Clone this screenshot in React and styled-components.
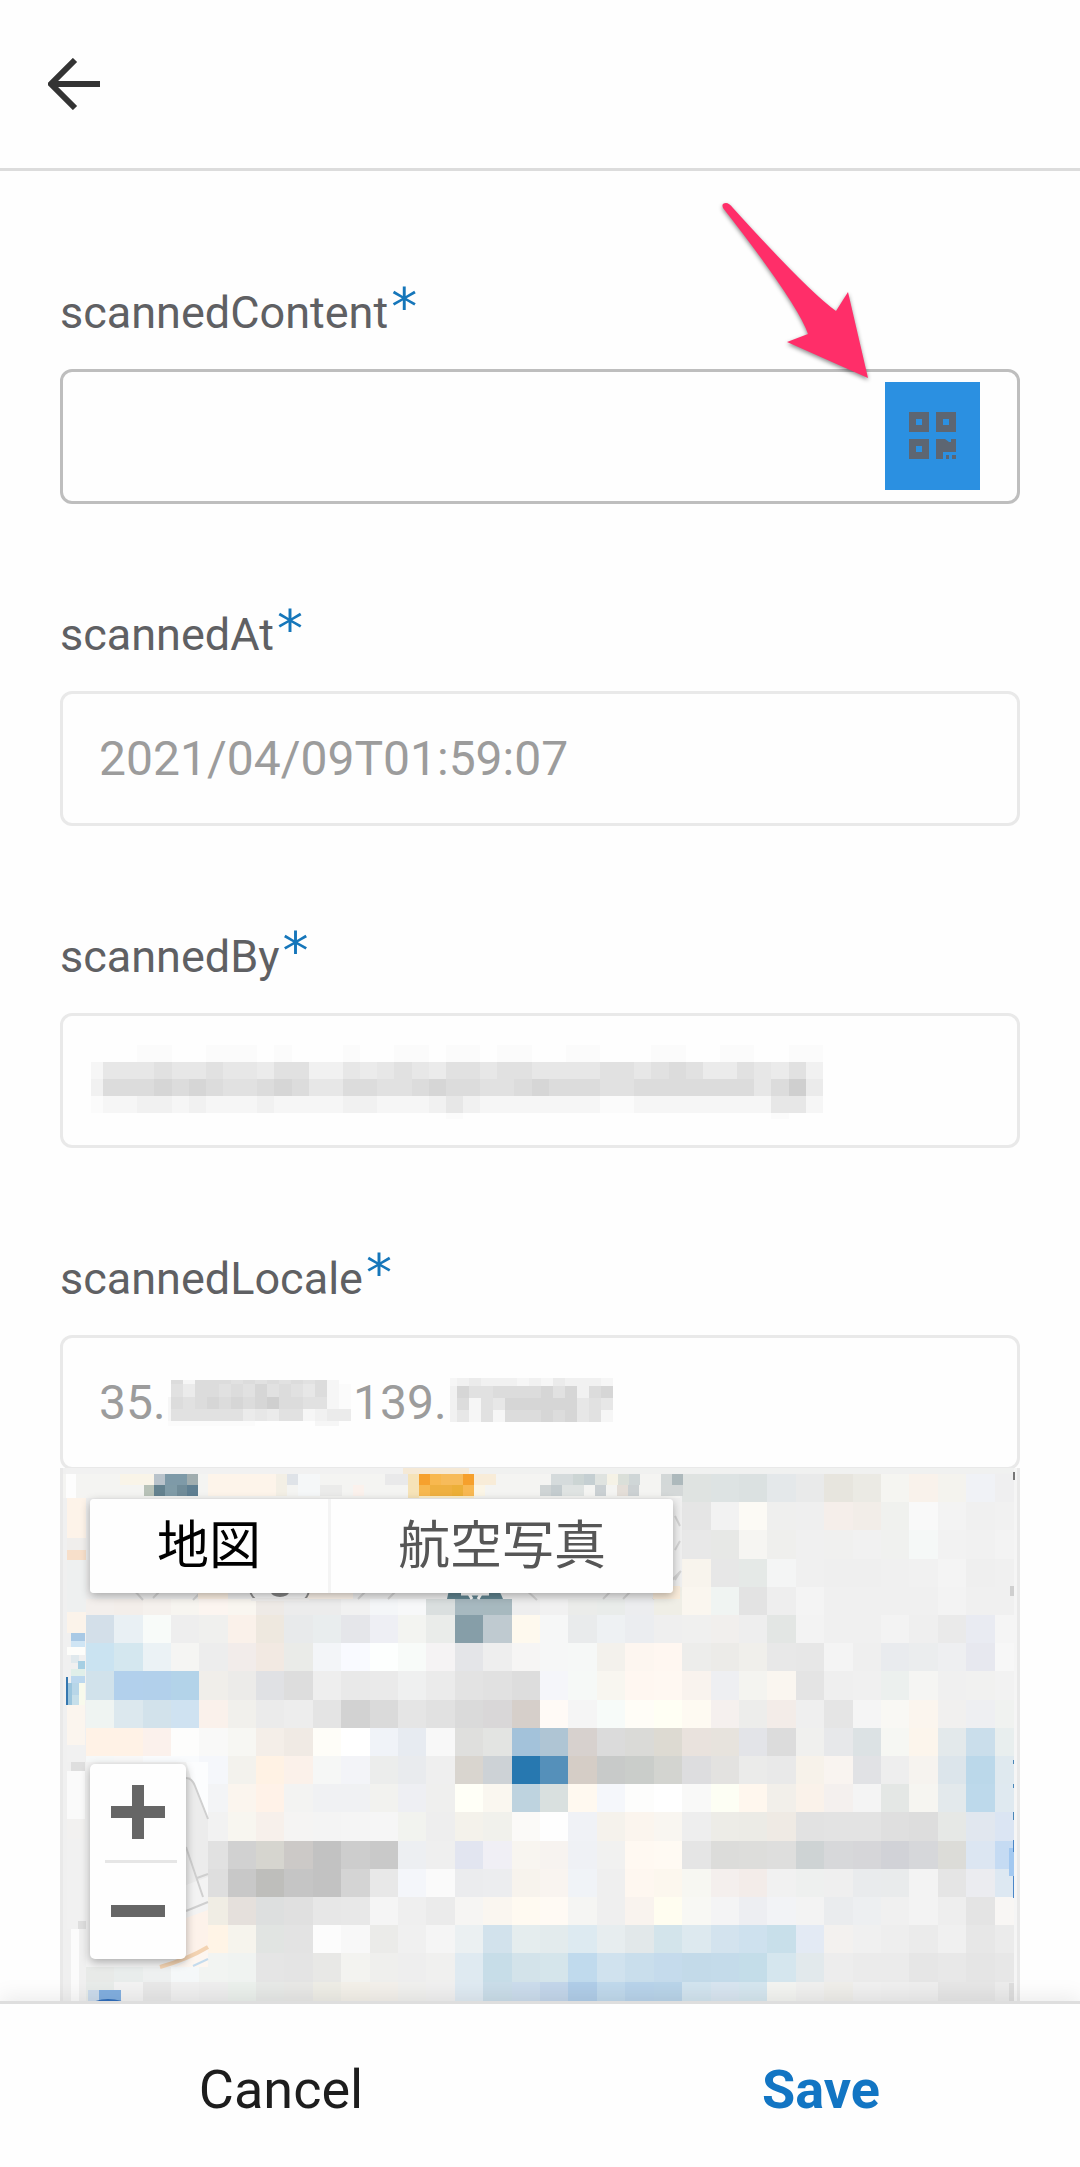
import React from "react";
import styled, { createGlobalStyle } from "styled-components";

const GlobalStyle = createGlobalStyle`
  *, *::before, *::after { box-sizing: border-box; }
  body { margin: 0; background: #fefefe; font-family: Roboto, "Noto Sans CJK JP", sans-serif; }
  button, input { font: inherit; }
`;

const Page = styled.div`
  display: flex;
  flex-direction: column;
  min-height: 100vh;
`;

const Header = styled.header`
  display: flex;
  align-items: center;
  height: 171px;
  padding: 0 36px;
  border-bottom: 3px solid #dcdcdc;
`;

const BackButton = styled.button`
  display: flex;
  padding: 12px;
  border: 0;
  background: none;
`;

const Form = styled.form`
  display: flex;
  flex: 1;
  flex-direction: column;
  gap: 105px;
  padding: 116px 60px 0;
`;

const Field = styled.div`
  display: flex;
  flex-direction: column;
`;

const Label = styled.label`
  margin-bottom: 30px;
  font-size: 45px;
  line-height: 52px;
  color: #5f6063;
`;

const Required = styled.span`
  margin-left: 3px;
  font-family: "DejaVu Sans", sans-serif;
  font-size: 52px;
  line-height: 0;
  vertical-align: 3px;
  color: #1576ba;
`;

const Shell = styled.div`
  position: relative;
  display: flex;
  align-items: center;
  gap: 2px;
  height: 135px;
  padding: 0 37px 0 36px;
  border: 3px solid ${(p) => (p.$active ? "#bebebe" : "#e9e9e9")};
  border-radius: 12px;
`;

const TextInput = styled.input`
  flex: ${(p) => (p.$width ? "none" : "1")};
  width: ${(p) => (p.$width ? p.$width + "px" : "auto")};
  min-width: 0;
  height: 100%;
  padding: 0;
  border: 0;
  outline: 0;
  background: none;
  font-size: 48px;
  color: #9c9c9c;
`;

const ScanButton = styled.button`
  display: flex;
  align-items: center;
  justify-content: center;
  width: 95px;
  height: 108px;
  margin-bottom: 2px;
  padding: 0;
  border: 0;
  background: #2b90e1;
`;

const Pointer = styled.svg`
  position: absolute;
  top: -177px;
  right: 142px;
  filter: drop-shadow(0 2px 2px rgba(0, 0, 0, 0.45));
`;

const MaskOver = styled.svg`
  position: absolute;
  left: 28px;
  top: 29px;
`;

const MaskInline = styled.svg`
  flex: none;
`;

const MapBox = styled.div`
  position: relative;
  height: 533px;
  margin-top: -2px;
  border: solid #e9e9e9;
  border-width: 0 3px;
  overflow: hidden;
  background: #f0f0f0;
`;

const MapCanvas = styled.svg`
  display: block;
  width: 100%;
  height: 534px;
`;

const MapTypes = styled.div`
  position: absolute;
  left: 27px;
  top: 31px;
  display: flex;
  border-radius: 4px;
  box-shadow: 0 3px 10px rgba(0, 0, 0, 0.3);
`;

const MapType = styled.button`
  height: 94px;
  padding: 0 67px 8px;
  border: 0;
  border-right: ${(p) => (p.$active ? "3px solid #f4f4f4" : "0")};
  border-radius: ${(p) => (p.$active ? "4px 0 0 4px" : "0 4px 4px 0")};
  background: #fefefe;
  font-family: "Noto Sans CJK JP", sans-serif;
  font-size: 52px;
  line-height: 72px;
  color: ${(p) => (p.$active ? "#000" : "#565656")};
`;

const ZoomPanel = styled.div`
  position: absolute;
  left: 27px;
  top: 296px;
  width: 96px;
  border-radius: 5px;
  background: #fefefe;
  box-shadow: 0 3px 10px rgba(0, 0, 0, 0.3);
`;

const ZoomButton = styled.button`
  display: flex;
  align-items: center;
  justify-content: center;
  width: 100%;
  height: 96px;
  padding: 0;
  border: 0;
  background: none;
`;

const ZoomDivider = styled.div`
  height: 3px;
  margin: 0 9px 0 15px;
  background: #e6e6e6;
`;

const Footer = styled.footer`
  position: sticky;
  bottom: 0;
  display: grid;
  grid-template-columns: 1fr 1fr;
  height: 166px;
  border-top: 3px solid #dedede;
  background: #fefefe;
  box-shadow: 0 -4px 20px rgba(0, 0, 0, 0.08);
`;

const Action = styled.button`
  padding: 8px 0 0 22px;
  border: 0;
  background: none;
  font-size: 54px;
  font-weight: ${(p) => (p.$primary ? 700 : 400)};
  color: ${(p) => (p.$primary ? "#1275c3" : "#1d1d1d")};
`;

/* Coarse blocks of the map, one line per row: the first column, then a colour for each tile. */
const TILES = [
  "21 dfe3e1 dde3e3 dbe1e1 e4e8ea e9eaea e7e5de ebeae4 f5f5f1 f9f2eb f4f3ee f0f2f6 efeff0",
  "21 e5e5e5 f2f2f2 fcfaf5 efefee efefef f5eeea f2ede8 f0f1ee f9f9f9 f3f3f3 f0f0f0 f1f1f1",
  "21 e8e8e8 e7e8e6 f6f5f2 efefed f0f0f0 f0f0ef f1f1f1 f0f1ef f5f8f7 f2f2f2 f1f1f1 f3f3f3",
  "21 f8f4ed e7e7e7 e5e9e7 f4f5f5 f0f0f0 efefef efefef f0f0f0 f1f1f1 f4f4f4 efefef f0f0f0",
  "0 f3efec f3eeea f5f1ed f7f5f0 fcf5f0 f9f6f0 eeeae6 ececec ececec f1f1f1 f4f6f8 f7f8f9 dadfdf a7b9c0 a7b9bf eeeeee f1f1f1 ebecea e9ecea ecedef efeee6 faf6ef f0f4f2 e3e3e3 eeeeee f4f4f4 f0f0f0 f0f0f0 f0f0f0 f0f0f0 f3f3f3 f0f0f0 f0f0f0",
  "0 d3dfe9 e9f0f4 f8fbf9 eeeeee f0f0ee faf1ea eee8df e8eaeb e9edee e5e6ea eeeff4 f3f4f1 eaecea 869ea8 bfcad0 fef9ee f6f7f7 e9ebec eef1f3 ebedf0 efefef f0f0ef f1efed eeeeee e3e6e4 f3f3f3 f0f0f0 f0f0f0 f3f3f3 efefef eaeaea e9ebf2 f5f5f5",
  "0 cae3f1 d4e7ef ebf2f5 f5f5f3 ededed f2ecea f2e9e2 eaebe8 f3f5f8 f9faff fdfffe f8fbf9 f5f3f4 e4e5e8 eeeeee f6f5f4 f6f7f7 f6f8f7 f3f1ec fdf6f0 fff7f1 ededeb ecebe8 f0efeb e8e8e8 e7e7e7 f4f4f4 efefef e9ebee ebedee eeeff1 e7e8ef f7f7f7",
  "0 d1e2eb b2d0ec b2d0eb b3d3e9 f0eeea ecebe9 e0e1e4 dddddd eeeeee e9e9e9 eaeaea eff0f0 ebebeb e3e3e3 e1e1e1 dddddd f5f6fa f6f9f7 f8f6f0 fff7f1 fff8f2 f9f3ee eeeff2 f4f4f0 faf6f0 e4e4e4 efefef f0f0f0 ecf0ee f5f5f3 f0f0f0 f1f1f0 f2f2f2",
  "0 eff4f2 dce8ee d2e2eb cfe2f1 faf1eb f1f0ec ebebeb ededed e4e4e4 d2d2d2 dadada e5e5e5 e1e1e1 dadada d9d7d8 d6cfca fffaf6 f5f5f5 f7fbf9 fffdf7 fffff4 fefaf2 f5f0ee ededeb f3ece8 efefef e5e5e5 f5f5f5 f9f8f4 fbf5ee f1f0ef eeeff2 f0f2f0",
  "0 fff2e6 fff2e6 fbf1ec fdfdfc f9f9f8 f7f7f3 f4eee8 f0eae4 fefdf8 ffffff f0f3f8 e7ebf1 f8f8f8 dfdfdd e3e4e2 a3c2da afc5d4 d7d1ce dbdbdb dadad7 dddad2 e9e2dd e7e3dd e3e4e8 dcdcdc f0f0ee e7e8ea dce2e4 f6f7f3 fcf5ec e3e9eb cadeeb e8eeee",
  "0 f6f8f8 f8f8f8 f9fbfd f9fbfd f5f7fb f3f2ed fff2e4 fbf1ea f6f7f6 f3f4f8 ecedec e9ebee efefef d9d5cf cdd2d6 2778b0 5590ba d5cdc6 c8cac9 cacdca d3d4d0 dddddf e3e2e0 ebebea e9e9e9 f7f2ea f9f4f0 e1e2e5 eeeeee f6f3ef dce5eb bbd8ea dfe9ef",
  "4 f3f4f6 fbf5ee fff2e8 f3f3f2 f0f1f3 f0f1f3 f2f2ef eeeff3 efefee fffff7 faf7f0 bed3df d9e0df fff9f0 f5f7fb fdfdfc ffffff f9f9f8 fdfef4 fff7ee f2efea faf2ea f4f0ee f4f4f4 e4e7e5 f6f5f1 e3e9ec bdd9eb dfe9f0",
  "4 f2f2f2 f8f6f0 f7f0eb f5f4f3 f4f4f4 f5f5f5 f6f6f6 f2f3ef eeeeee f4f2eb f1f1ec fbfaf8 fefefe f0f2f6 f5f2ec fbf5ee f9f6f1 eeeeee edece7 ecebe6 efeae4 e2e2e2 e3e3e3 e3e3e3 dfdfdf dddddd e6e8e6 e1e7ef dbe5f3",
  "4 e1e1e1 d1d1d1 d6d5cf ccc9c7 c2c2c2 cdcdcd c9c9c9 edeff2 efefef e2e5f0 f0eff5 f8f5f0 f7f3f0 eff1f5 f1f1f0 fff9f2 fffaf3 e5e5e5 dcdcda dddddb dededd ced3d4 d7d8da d6d6d9 d1d2d7 d6d7da dcdcd8 dce6f2 c5dbf3",
  "4 dedede c8c8c8 bebebb c5c5c5 c2c2c2 d4d4d4 e8e8e8 f4f6fa fafafa ebecee ecedef f7f3ed f9f4f0 f0f3f7 efefef fef7f0 fcf7ee f7f7f2 f4efed f3ece9 f1f1f1 eef0ef efefef e9ebed e9ebec f3f3f3 e5e5e5 ebecf0 dde8f2",
  "4 f0ede4 e5e0dc dddfdf e0e0e0 e7e7e7 e8e8e8 f5f5f5 efefef ebebeb f6f5f3 faf6f0 fffaf1 fffaf4 f5f5f3 efefef f9f3ee fffdf0 f8f8f4 f4f4f5 edeef2 f2f3f6 f3f3f3 eaecee edeff1 f0f0f0 f3f3f3 eeeeee e4e4e4 f8f6f4",
  "4 fff4e6 f6f4ed e1e4e2 e3e3e3 fcfcfc f8f8f8 ebebe9 f0f0f0 f5f5f5 ebf0f2 d2e2ec e5edee e3ebed ddeaf1 e7edef e2e8ea d3e4eb dde9ef d3e3ee cee1ee c8dfea e3eaf4 f3f1ef f0f0f0 eeeeee ebebeb f0f0f0 e7e7e7 ebebeb",
  "0 e8eae8 e9edec eef0f0 f5f8f9 f2f4f2 f0f3f1 e5e5e5 e4e4e4 e8e8e6 f3f3f0 efefed eeeeee f0f0ef dfeaf1 c7dde8 d3e3ea d5e5eb c0daed d0e2ee c9deec c5dbec c3dae9 c4dbea c4dde9 d5e6ee e2e9ec ededed ebebeb ebebeb e6e6e6 e8e8e8 e5e5e5 e7e7e7",
  "0 e8ecea f3f3f3 e8e8e8 f0f0f0 eeeeee ebf0ec e7e9e7 e8e8e6 eeede6 f3f0e9 f3f0eb f0f0ee f0f0f0 dfeaf2 cadde9 cbdcec c3d6ea b0cde8 c0d9ec b8d3ea b9d4e9 d2e4ef d8e5f0 d5e6ef f3f4f1 f0f0ef efeeea f0f0f0 efefef eeeeee e6e6e6 e6e6e6 ececec",
];

/* Finer blocks: x, y, width, height, colour. */
const DETAILS = [
  [3, 0, 368, 6, "#f1f1f1"], [345, 0, 606, 5, "#f0f1f0"], [340, 0, 66, 6, "#f5e9d6"],
  [0, 6, 617, 24, "#f4f4f2"], [3, 6, 10, 24, "#fdfdfd"], [57, 6, 34, 11, "#f9f4e8"],
  [91, 6, 11, 11, "#b9c3cb"], [102, 6, 22, 11, "#7e9aa8"], [124, 6, 11, 11, "#a0adaf"],
  [81, 17, 10, 11, "#b8c2b8"], [91, 17, 11, 11, "#64828f"], [102, 17, 12, 11, "#7f9ba7"],
  [114, 17, 10, 11, "#708c99"], [124, 17, 11, 11, "#5f7f92"], [145, 6, 68, 22, "#fdf4ea"],
  [213, 6, 11, 22, "#f3efe5"], [224, 6, 11, 11, "#dfe3e8"], [235, 6, 22, 22, "#f5f7f8"],
  [257, 17, 22, 11, "#ebebea"], [290, 17, 11, 11, "#fbf1ec"], [322, 6, 23, 11, "#e9e9ea"],
  [345, 6, 11, 24, "#f6e3b8"], [356, 6, 11, 11, "#f6a12e"], [367, 6, 11, 11, "#f8b84f"],
  [378, 6, 22, 11, "#f7bb5a"], [400, 6, 11, 11, "#f6a02c"], [411, 6, 22, 11, "#f8ecd8"],
  [356, 17, 11, 11, "#f7b850"], [367, 17, 22, 11, "#efb040"], [389, 17, 11, 11, "#ecaf38"],
  [400, 17, 11, 11, "#f8b852"], [356, 28, 55, 3, "#fbeecb"], [411, 17, 11, 11, "#fbf5e6"],
  [488, 6, 22, 11, "#d5dbdc"], [510, 6, 11, 11, "#ccd5d4"], [521, 6, 11, 11, "#c5cfd2"],
  [532, 6, 12, 11, "#dfe3e0"], [544, 6, 11, 11, "#f5f2e6"], [555, 6, 11, 11, "#dadfd9"],
  [566, 6, 11, 11, "#cfd6d7"], [598, 6, 11, 11, "#d3d8d8"], [609, 6, 11, 11, "#adb9bc"],
  [477, 17, 11, 11, "#cfd4d5"], [488, 17, 11, 11, "#c4cccf"], [499, 17, 22, 11, "#dfe3e2"],
  [532, 17, 11, 11, "#cad0d3"], [554, 17, 11, 11, "#e4ded8"], [565, 17, 11, 11, "#ccd1d3"],
  [598, 17, 22, 11, "#d4d8d8"],
  [4, 30, 19, 40, "#fdf3e9"], [4, 70, 19, 12, "#f0eeec"], [4, 82, 19, 10, "#f7dfca"],
  [4, 92, 19, 52, "#eef0f0"], [4, 144, 19, 21, "#fbf3ea"],
  [8, 165, 14, 8, "#a9c9e5"], [8, 173, 14, 6, "#cfe5f4"], [4, 179, 18, 8, "#fdfdfa"],
  [8, 187, 8, 8, "#e0e9ed"], [15, 193, 7, 8, "#a6cfe3"], [8, 201, 14, 7, "#e0efe9"],
  [3, 209, 2, 28, "#3577af"], [8, 208, 14, 7, "#bcd8ee"], [5, 215, 4, 22, "#9cc6de"], [9, 215, 7, 12, "#b8d6e8"],
  [16, 215, 6, 22, "#f8faec"], [9, 227, 7, 10, "#c6dfea"], [4, 237, 18, 40, "#fbf5ee"],
  [4, 277, 18, 17, "#f1f1f1"], [8, 294, 14, 9, "#dedede"], [4, 303, 18, 48, "#fafafa"],
  [4, 351, 18, 20, "#f2f1f0"], [4, 371, 18, 90, "#f1f1f1"], [15, 453, 8, 8, "#dedede"],
  [8, 461, 8, 73, "#fbfbfb"], [25, 522, 11, 12, "#cbdbec"], [36, 522, 22, 12, "#82afe0"],
  [951, 0, 3, 534, "#f5f5f5"],
  [946, 380, 5, 28, "#a2c8f0"], [950, 372, 1, 12, "#4b87c8"], [950, 408, 1, 22, "#4b87c8"],
  [950, 344, 1, 8, "#4b87b8"], [950, 316, 1, 4, "#4b87b8"], [950, 292, 1, 4, "#4b87b8"],
  [950, 4, 2, 8, "#777777"], [947, 118, 4, 10, "#cfcfcf"], [946, 515, 5, 19, "#dddddd"],
];

function MapDrawing() {
  const blocks = [];
  TILES.forEach((line, row) => {
    const [start, ...colours] = line.split(" ");
    colours.forEach((c, i) => {
      const x = Math.round(22.7 + (Number(start) + i) * 28.4);
      const next = Math.round(22.7 + (Number(start) + i + 1) * 28.4);
      const y = Math.round(6 + row * 28.2);
      const below = Math.round(6 + (row + 1) * 28.2);
      blocks.push(<rect key={row + "-" + i} x={x} y={y} width={next - x} height={below - y} fill={"#" + c} />);
    });
  });
  return (
    <MapCanvas viewBox="0 0 954 534" preserveAspectRatio="xMinYMin slice" aria-hidden="true">
      <g shapeRendering="crispEdges">
        <rect width="954" height="534" fill="#f0f0f0" />
        {blocks}
        {DETAILS.map(([x, y, w, h, c], i) => (
          <rect key={i} x={x} y={y} width={w} height={h} fill={c} />
        ))}
        <rect x="23" y="30" width="594" height="101" fill="#efefef" />
        <rect x="23" y="294" width="122" height="205" fill="#f3f3f3" />
      </g>
      <g fill="none" stroke="#d3d3d3" strokeWidth="2">
        <path d="M60 110l20 22M90 130l25-25M130 132l30-30M295 131l30-30M325 131l30-30M450 110l24 22M540 131l26-26M560 131l26-26M590 131l28-28" />
        <path d="M612 48l5 10M612 82l5-9M612 112l5-8" />
      </g>
      <rect x="135" y="120" width="30" height="11" fill="#fdf1e4" />
      <rect x="230" y="120" width="60" height="11" fill="#fcf3ea" />
      <rect x="590" y="118" width="27" height="13" fill="#faecda" />
      <path d="M186 118q1 9 6 13h50q4-4 5-13" fill="#f7f7f7" stroke="#8d8d8d" strokeWidth="2" />
      <ellipse cx="217" cy="124" rx="9" ry="5" fill="#858585" />
      <rect x="188" y="130" width="58" height="3" fill="#f0efee" />
      <path d="M386 122l-2 9h56l-4-9z" fill="#608490" />
      <path d="M398 126h28M406 126l3 5M418 126l-3 5" stroke="#fff" strokeWidth="3" fill="none" />
      <path d="M123 309h22v100l-22 8z" fill="#ececec" />
      <path d="M128 310l17 40v-56h-22z" fill="#fcfdfe" />
      <path d="M123 310q6 0 9 8l13 33M123 379l17 50M134 410l11-4M123 443l22-9" fill="none" stroke="#cfcfcf" strokeWidth="2" />
      <path d="M123 450l22-8v36l-22 12z" fill="#fdf2ea" />
      <path d="M93 499h20l32-18v18z" fill="#fdf6f0" />
      <path d="M97 499q28-8 48-20" fill="none" stroke="#f3d3b2" strokeWidth="4" />
      <path d="M130 498l15-7" stroke="#c4dbed" strokeWidth="2" />
      <path d="M30 534q14-6 32 0z" fill="#2f6dbb" />
    </MapCanvas>
  );
}

const SHADES = {
  a: "#fbfbfb", b: "#f6f6f6", c: "#f1f1f1", d: "#ebebeb", e: "#e7e7e7",
  f: "#e1e1e1", g: "#dcdcdc", h: "#d6d6d6", i: "#cfcfcf",
};

/* The first column of a mask may be narrower than the rest. */
function Mosaic({ as: Tag, rows, first, cell, heights, title }) {
  const columns = Math.max(...rows.map((r) => r.length));
  const width = Math.round(first + (columns - 1) * cell);
  const height = heights.reduce((a, b) => a + b, 0);
  const left = (i) => (i === 0 ? 0 : Math.round(first + (i - 1) * cell));
  const tops = heights.map((_, r) => heights.slice(0, r).reduce((a, b) => a + b, 0));
  return (
    <Tag width={width} height={height} shapeRendering="crispEdges" role="img" aria-label={title}>
      {rows.map((row, r) =>
        [...row].map((ch, i) =>
          ch === "." ? null : (
            <rect
              key={r + "-" + i}
              x={left(i)}
              y={tops[r]}
              width={left(i + 1) - left(i)}
              height={heights[r]}
              fill={SHADES[ch]}
            />
          )
        )
      )}
    </Tag>
  );
}

const NAME_MASK = [
  "...aa..aaa.a...a..aa.aa.aa..aa...aa..aa..aa",
  "beeefeefeedffccedefedffeffeeeeffefgfddfedfc",
  "cggghghgffghgeeggffghggffghgggffgggggggegid",
  "abbccbcbbbcbbbbccbbbcecbbbbbbbaabbbbbbbbeeb",
  ".....................a..................a..",
];

const LATITUDE_MASK = [
  ".gbgggfgfgfgfgb.",
  ".fdggfgfhfgfegba",
  "bgfghghghiggffba",
  "bffffffdedffbcdd",
  "aaaaaaaa.....bb.",
];

const LONGITUDE_MASK = ["bcdcccbcbdcccb", "chffgggghfhcgh", "cgbfehhhhhhefe", "cebfbggghghefb", ".............."];

function FormField({ id, label, active, children, after }) {
  return (
    <Field>
      <Label htmlFor={id}>
        {label}
        <Required>*</Required>
      </Label>
      <Shell $active={active}>{children}</Shell>
      {after}
    </Field>
  );
}

export default function App() {
  return (
    <Page>
      <GlobalStyle />
      <Header>
        <BackButton type="button" aria-label="Back">
          <svg width="52" height="52" viewBox="0 0 52 52" fill="none" stroke="#333" strokeWidth="6">
            <path d="M27 2L3 26l24 24M4 26h48" />
          </svg>
        </BackButton>
      </Header>
      <Form id="scan-form" onSubmit={(e) => e.preventDefault()}>
        <FormField id="scannedContent" label="scannedContent" active>
          <TextInput id="scannedContent" type="text" required />
          <ScanButton type="button" aria-label="Scan code">
            <svg width="48" height="48" viewBox="0 0 48 48" fill="#5d6672" fillRule="evenodd">
              <path d="M0 0h20v20H0zM7 7v6h6V7zM27 0h20v20H27zM34 7v6h6V7zM0 27h20v20H0zM7 34v6h6v-6z" />
              <path d="M27 27h9l4 3h2v-3h5v13H34v7h-7zM37 43h3v4h-3zM43 43h4v4h-4z" />
            </svg>
          </ScanButton>
          <Pointer width="160" height="190" viewBox="715 195 160 190" aria-hidden="true">
            <path d="M723 208Q721 203 726 203Q729 203 733 208Q809 292 836 311L848 292L868 378L787 342L808 334Q798 304 723 208Z" fill="#ff2e69" />
          </Pointer>
        </FormField>
        <FormField id="scannedAt" label="scannedAt">
          <TextInput id="scannedAt" type="text" readOnly value="2021/04/09T01:59:07" />
        </FormField>
        <FormField id="scannedBy" label="scannedBy">
          <TextInput id="scannedBy" type="text" readOnly value="" />
          <Mosaic
            as={MaskOver}
            rows={NAME_MASK}
            first={12}
            cell={17.14}
            heights={[17, 17, 17, 17, 6]}
            title="Hidden name"
          />
        </FormField>
        <FormField
          id="scannedLocale"
          label="scannedLocale"
          after={
            <MapBox>
              <MapDrawing />
              <MapTypes>
                <MapType type="button" $active>地図</MapType>
                <MapType type="button">航空写真</MapType>
              </MapTypes>
              <ZoomPanel>
                <ZoomButton type="button" aria-label="Zoom in">
                  <svg width="54" height="54" fill="#666"><path d="M21 0h12v21h21v12H33v21H21V33H0V21h21z" /></svg>
                </ZoomButton>
                <ZoomDivider />
                <ZoomButton type="button" aria-label="Zoom out">
                  <svg width="54" height="12" fill="#666"><path d="M0 0h54v12H0z" /></svg>
                </ZoomButton>
              </ZoomPanel>
            </MapBox>
          }
        >
          <TextInput id="scannedLocale" type="text" readOnly value="35." $width={67} />
          <Mosaic
            as={MaskInline}
            rows={LATITUDE_MASK}
            first={3}
            cell={12}
            heights={[4, 13, 12, 12, 5]}
            title="Hidden digits"
          />
          <TextInput type="text" readOnly aria-label="Longitude" value="139." $width={95} />
          <Mosaic
            as={MaskInline}
            rows={LONGITUDE_MASK}
            first={7}
            cell={12}
            heights={[8, 12, 12, 12, 6]}
            title="Hidden digits"
          />
        </FormField>
      </Form>
      <Footer>
        <Action type="button">Cancel</Action>
        <Action type="submit" form="scan-form" $primary>Save</Action>
      </Footer>
    </Page>
  );
}
